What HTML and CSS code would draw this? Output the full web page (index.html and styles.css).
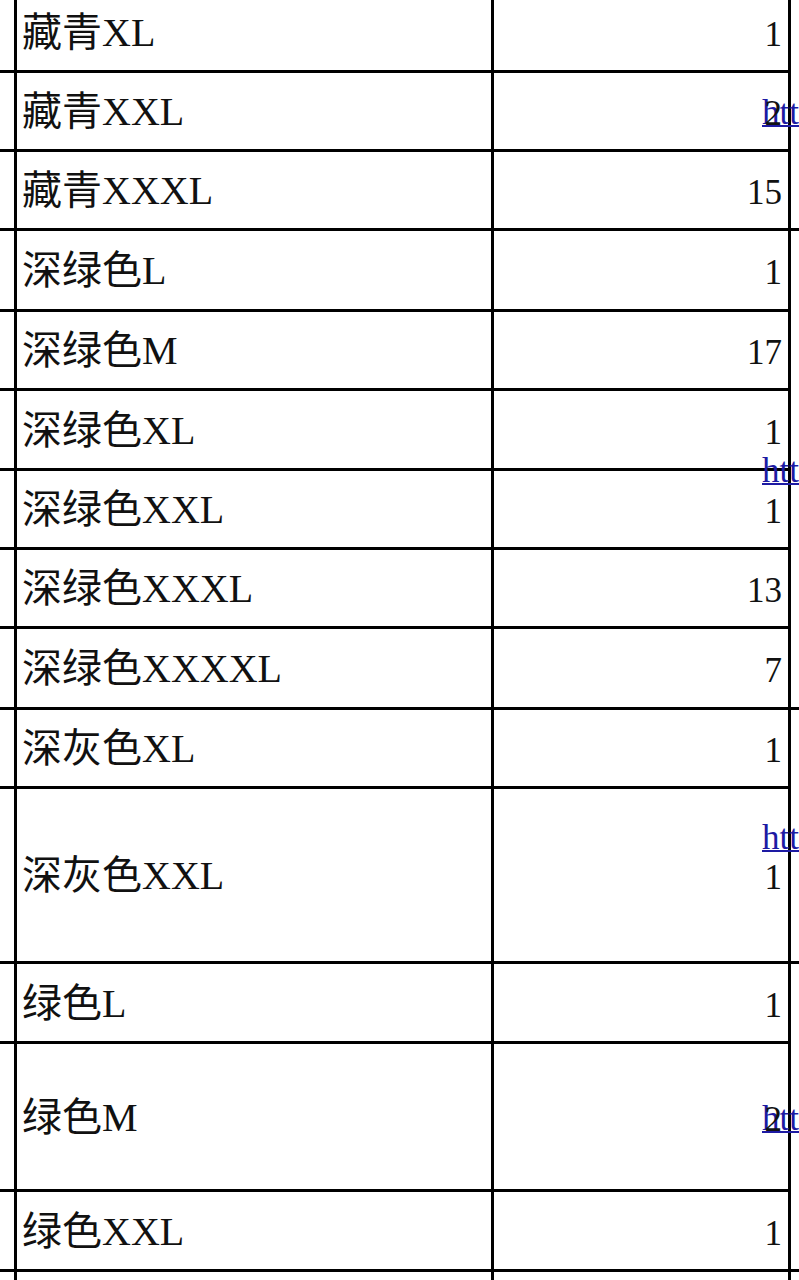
FILE: index.html
```html
<!DOCTYPE html>
<html lang="zh-CN">
<head>
<meta charset="utf-8">
<title>库存表</title>
<link rel="stylesheet" href="styles.css">
</head>
<body>
<table class="sheet">
  <colgroup>
    <col class="c0">
    <col class="c1">
    <col class="c2">
    <col class="c3">
  </colgroup>
  <tbody>
    <tr class="h80">
      <td class="edge"></td>
      <td class="name">藏青XL</td>
      <td class="num">1</td>
      <td class="url" rowspan="3"><a class="link" href="#">https://item.taobao.com/item.htm?id=1</a></td>
    </tr>
    <tr class="h79">
      <td class="edge"></td>
      <td class="name">藏青XXL</td>
      <td class="num">2</td>
    </tr>
    <tr class="h79">
      <td class="edge"></td>
      <td class="name">藏青XXXL</td>
      <td class="num">15</td>
    </tr>
    <tr class="h81">
      <td class="edge"></td>
      <td class="name">深绿色L</td>
      <td class="num">1</td>
      <td class="url" rowspan="6"><a class="link" href="#">https://item.taobao.com/item.htm?id=2</a></td>
    </tr>
    <tr class="h79">
      <td class="edge"></td>
      <td class="name">深绿色M</td>
      <td class="num">17</td>
    </tr>
    <tr class="h80">
      <td class="edge"></td>
      <td class="name">深绿色XL</td>
      <td class="num">1</td>
    </tr>
    <tr class="h79">
      <td class="edge"></td>
      <td class="name">深绿色XXL</td>
      <td class="num">1</td>
    </tr>
    <tr class="h79">
      <td class="edge"></td>
      <td class="name">深绿色XXXL</td>
      <td class="num">13</td>
    </tr>
    <tr class="h81">
      <td class="edge"></td>
      <td class="name">深绿色XXXXL</td>
      <td class="num">7</td>
    </tr>
    <tr class="h79">
      <td class="edge"></td>
      <td class="name">深灰色XL</td>
      <td class="num">1</td>
      <td class="url" rowspan="2"><a class="link" href="#">https://item.taobao.com/item.htm?id=3</a></td>
    </tr>
    <tr class="h175">
      <td class="edge"></td>
      <td class="name">深灰色XXL</td>
      <td class="num">1</td>
    </tr>
    <tr class="h80">
      <td class="edge"></td>
      <td class="name">绿色L</td>
      <td class="num">1</td>
      <td class="url" rowspan="3"><a class="link" href="#">https://item.taobao.com/item.htm?id=4</a></td>
    </tr>
    <tr class="h148">
      <td class="edge"></td>
      <td class="name">绿色M</td>
      <td class="num">2</td>
    </tr>
    <tr class="h80">
      <td class="edge"></td>
      <td class="name">绿色XXL</td>
      <td class="num">1</td>
    </tr>
    <tr class="h80">
      <td class="edge"></td>
      <td class="name"></td>
      <td class="num"></td>
      <td class="url"></td>
    </tr>
  </tbody>
</table>
</body>
</html>
```

FILE: styles.css
```css
html, body {
  margin: 0;
  padding: 0;
  background: #ffffff;
}

body {
  overflow: hidden;
  font-family: "Liberation Serif", "Noto Sans CJK SC", serif;
  color: #111111;
}

.sheet {
  border-collapse: collapse;
  table-layout: fixed;
  width: 1074px;
  margin: -10px 0 0 -86px;
  background: #ffffff;
}

.c0 { width: 100px; }
.c1 { width: 477px; }
.c2 { width: 297px; }
.c3 { width: 200px; }

.sheet td {
  border: 3px solid #000000;
  padding: 2px 4px 0 5px;
  vertical-align: middle;
  font-size: 40px;
  line-height: 44px;
  white-space: nowrap;
}

.h79 { height: 79px; }
.h80 { height: 80px; }
.h81 { height: 81px; }
.h148 { height: 148px; }
.h175 { height: 175px; }

.name {
  text-align: left;
}

.sheet td.num {
  text-align: right;
  padding-right: 6px;
  padding-top: 6px;
  font-size: 35px;
}

.sheet td.url {
  padding: 0;
  overflow: visible;
}

.link {
  display: inline-block;
  margin-left: -29px;
  font-size: 35px;
  line-height: 36px;
  color: #1d1aa3;
  text-decoration: underline;
  text-decoration-thickness: 2px;
  white-space: nowrap;
}
```
